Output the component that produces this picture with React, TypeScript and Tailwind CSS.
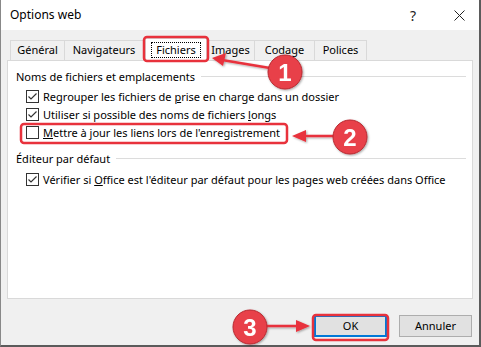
import React from "react";

const font = { fontFamily: '"Segoe UI", "Noto Sans", "Liberation Sans", sans-serif' };

function Check({ checked }: { checked: boolean }) {
  return (
    <div className="w-[13px] h-[13px] border border-[#333333] bg-white flex items-center justify-center shrink-0">
      {checked && (
        <svg width="11" height="11" viewBox="0 0 11 11">
          <path d="M1.5 5.5 L4 8 L9.5 2.5" fill="none" stroke="#333" strokeWidth="1.2" />
        </svg>
      )}
    </div>
  );
}

function Row({ checked, children }: { checked: boolean; children: React.ReactNode }) {
  return (
    <div className="flex items-center gap-[4px] h-[18px] pl-[18px]">
      <Check checked={checked} />
      <span className="text-[11px] text-black leading-none whitespace-nowrap">{children}</span>
    </div>
  );
}

function Section({ title }: { title: string }) {
  return (
    <div className="flex items-center h-[16px] pl-[8px] pr-[6px]">
      <span className="text-[11px] text-black whitespace-nowrap leading-none">{title}</span>
      <div className="flex-1 h-px bg-[#dcdcdc] ml-[6px]" />
    </div>
  );
}

function Tab({ label, w, selected }: { label: string; w: string; selected?: boolean }) {
  if (selected)
    return (
      <div className={`relative z-10 -mb-px h-[23px] bg-white border border-b-0 border-[#d9d9d9] flex items-center justify-center ${w}`}>
        <span className="border border-dotted border-black px-[4px] leading-[14px] text-[11px]">{label}</span>
      </div>
    );
  return (
    <div className={`h-[20px] bg-[#f0f0f0] border border-b-0 border-[#d9d9d9] -ml-px first:ml-0 flex items-center justify-center text-[11px] ${w}`}>
      {label}
    </div>
  );
}

export default function App() {
  return (
    <div style={font} className="relative w-[481px] h-[347px] overflow-hidden bg-[#f0f0f0] text-black">
      <div className="absolute inset-0 border-l border-r-2 border-b-2 border-[#5b5b5b] border-l-[#888] pointer-events-none z-20" />
      {/* Title bar */}
      <div className="h-[30px] bg-white flex items-center pl-[10px] pr-[16px]">
        <span className="text-[12px] flex-1">Options web</span>
        <span className="text-[14px] mr-[38px] text-[#222]">?</span>
        <svg width="11" height="11" viewBox="0 0 11 11">
          <path d="M0.5 0.5 L10.5 10.5 M10.5 0.5 L0.5 10.5" stroke="#222" strokeWidth="1" />
        </svg>
      </div>
      {/* Tabs */}
      <div className="pl-[10px] pt-[7px] flex items-end h-[30px]">
        <Tab label="Général" w="w-[55px]" />
        <Tab label="Navigateurs" w="w-[80px]" />
        <div className="w-[1px]" />
        <Tab label="Fichiers" w="w-[62px]" selected />
        <Tab label="Images" w="w-[49px]" />
        <Tab label="Codage" w="w-[61px]" />
        <Tab label="Polices" w="w-[53px]" />
      </div>
      {/* Panel */}
      <div className="mx-[7px] mr-[8px] h-[239px] bg-white border border-[#d9d9d9] pt-[7px]">
        <Section title="Noms de fichiers et emplacements" />
        <div className="mt-[3px] flex flex-col">
          <Row checked>Regrouper les fichiers de <u>p</u>rise en charge dans un dossier</Row>
          <Row checked>Utiliser si possible des noms de fichiers <u>l</u>ongs</Row>
          <Row checked={false}><u>M</u>ettre à jour les liens lors de l'enregistrement</Row>
        </div>
        <div className="mt-[9px]">
          <Section title="Éditeur par défaut" />
        </div>
        <div className="mt-[4px]">
          <Row checked>Vérifier si <u>O</u>ffice est l'éditeur par défaut pour les pages web créées dans Office</Row>
        </div>
      </div>
      {/* Buttons */}
      <div className="flex justify-end gap-[12px] pr-[9px] pt-[16px]">
        <button className="w-[73px] h-[22px] bg-[#e1e1e1] border-2 border-[#0078d7] text-[11px]">OK</button>
        <button className="w-[73px] h-[22px] bg-[#e1e1e1] border border-[#adadad] text-[11px]">Annuler</button>
      </div>
      {/* Annotations */}
      <svg className="absolute inset-0 z-30 pointer-events-none" width="481" height="347" viewBox="0 0 481 347">
        <defs>
          <filter id="sh" x="-30%" y="-30%" width="160%" height="160%">
            <feDropShadow dx="1" dy="1" stdDeviation="1" floodColor="#000" floodOpacity="0.35" />
          </filter>
        </defs>
        <g fill="none" stroke="#e8323c" strokeWidth="2.5">
          <rect x="144" y="37" width="64" height="24" rx="3" />
          <rect x="21" y="124" width="266" height="19" rx="3" />
          <rect x="313" y="315" width="75" height="25" rx="3" />
        </g>
        <g filter="url(#sh)">
          <line x1="270" y1="68" x2="222" y2="60" stroke="#e8323c" strokeWidth="2.5" />
          <polygon points="212,58 226,53 223,66" fill="#e8323c" />
          <circle cx="285" cy="72" r="17" fill="#e8404a" stroke="#b82a30" strokeWidth="1" />
          <text x="285" y="81" textAnchor="middle" fontSize="24" fontWeight="bold" fill="white" style={{ fontFamily: '"Liberation Sans", Arial, sans-serif' }}>1</text>
          <line x1="334" y1="136" x2="305" y2="136" stroke="#e8323c" strokeWidth="2.5" />
          <polygon points="292,136 306,130 306,142" fill="#e8323c" />
          <circle cx="350" cy="137" r="17" fill="#e8404a" stroke="#b82a30" strokeWidth="1" />
          <text x="350" y="146" textAnchor="middle" fontSize="24" fontWeight="bold" fill="white" style={{ fontFamily: '"Liberation Sans", Arial, sans-serif' }}>2</text>
          <line x1="266" y1="326" x2="298" y2="326" stroke="#e8323c" strokeWidth="2.5" />
          <polygon points="310,326 296,320 296,332" fill="#e8323c" />
          <circle cx="250" cy="327" r="17" fill="#e8404a" stroke="#b82a30" strokeWidth="1" />
          <text x="250" y="336" textAnchor="middle" fontSize="24" fontWeight="bold" fill="white" style={{ fontFamily: '"Liberation Sans", Arial, sans-serif' }}>3</text>
        </g>
      </svg>
    </div>
  );
}
